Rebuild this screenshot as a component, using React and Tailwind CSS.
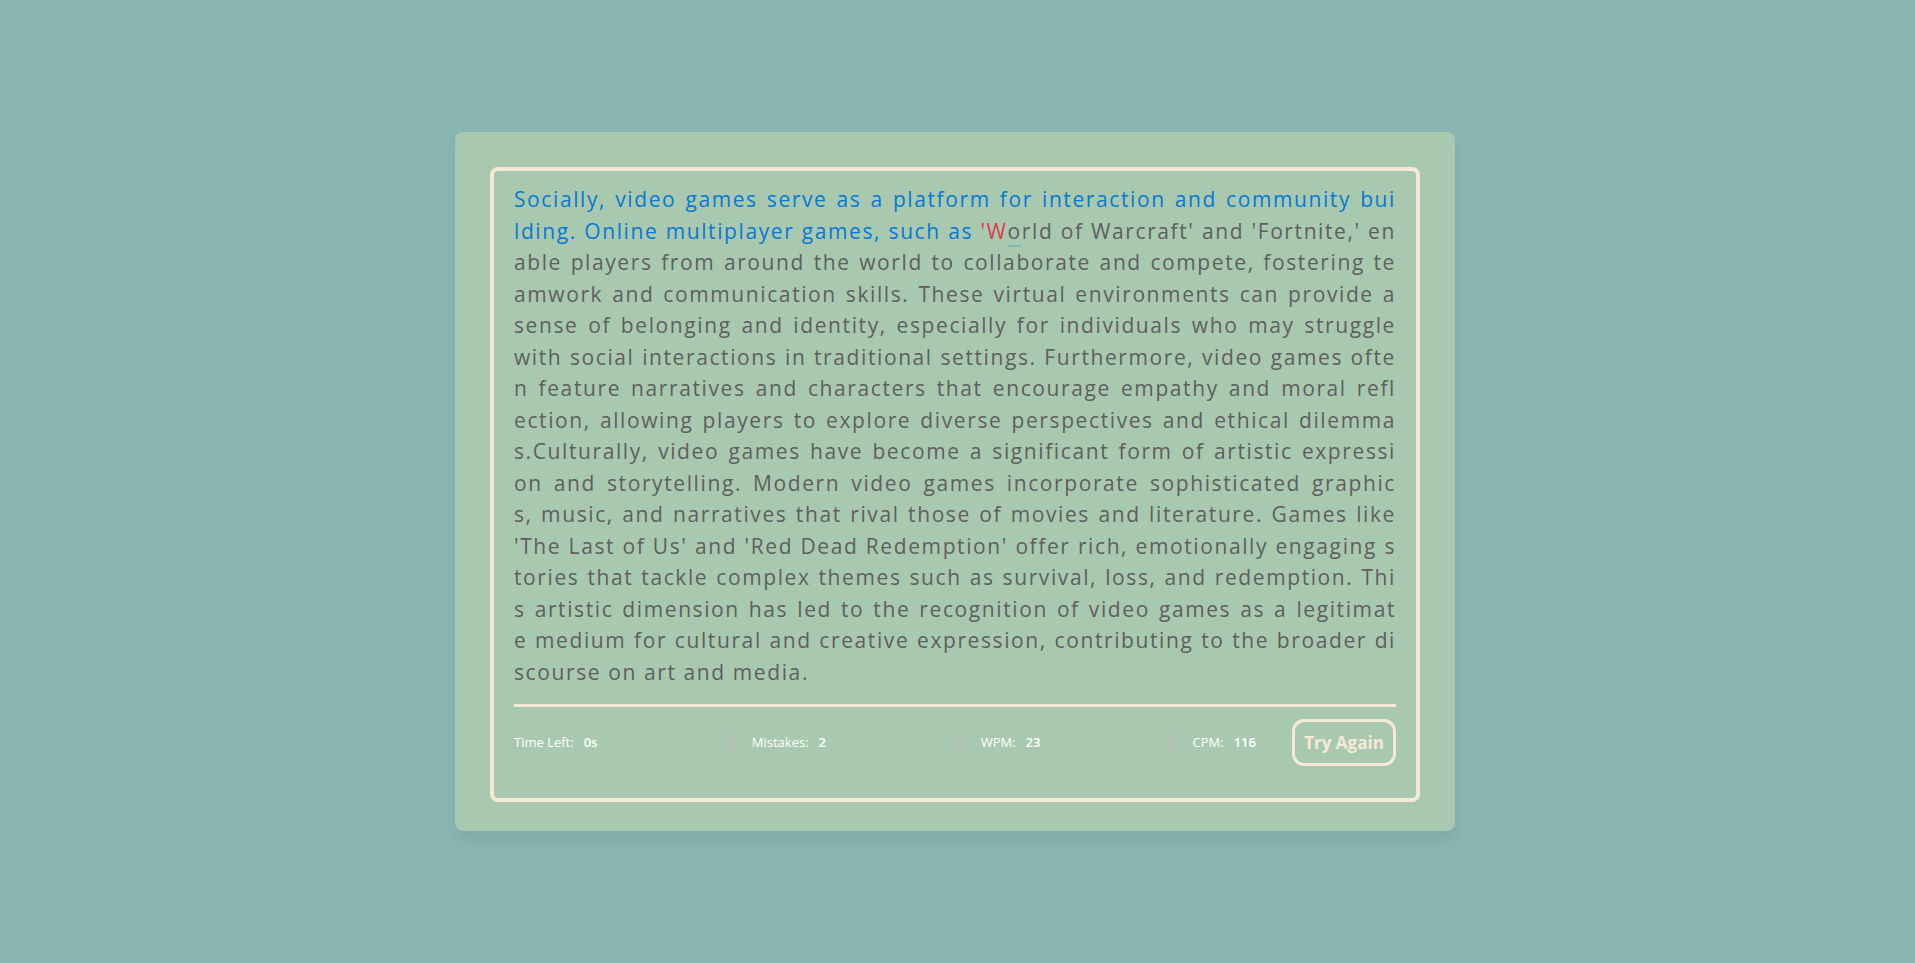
import React from "react";

const typedLines = [
  "Socially, video games serve as a platform for interaction and community bui",
];

const restLines = [
  "able players from around the world to collaborate and compete, fostering te",
  "amwork and communication skills. These virtual environments can provide a",
  "sense of belonging and identity, especially for individuals who may struggle",
  "with social interactions in traditional settings. Furthermore, video games ofte",
  "n feature narratives and characters that encourage empathy and moral refl",
  "ection, allowing players to explore diverse perspectives and ethical dilemma",
  "s.Culturally, video games have become a significant form of artistic expressi",
  "on and storytelling. Modern video games incorporate sophisticated graphic",
  "s, music, and narratives that rival those of movies and literature. Games like",
  "'The Last of Us' and 'Red Dead Redemption' offer rich, emotionally engaging s",
  "tories that tackle complex themes such as survival, loss, and redemption. Thi",
  "s artistic dimension has led to the recognition of video games as a legitimat",
  "e medium for cultural and creative expression, contributing to the broader di",
];

// widths keep the dividers where the design has them
const stats = [
  { label: "Time Left:", value: "0s", cls: "w-[217px]" },
  { label: "Mistakes:", value: "2", cls: "w-[230px] pl-5 border-l-2 border-[#c6b9c4]" },
  { label: "WPM:", value: "23", cls: "w-[213px] pl-5 border-l-2 border-[#c6b9c4]" },
  { label: "CPM:", value: "116", cls: "flex-1 pl-5 border-l-2 border-[#c6b9c4]" },
];

const lineCls = "text-justify [text-align-last:justify] leading-[31.5px]";

const App = () => {
  return (
    <div className="min-h-screen w-full bg-[#89b5b3] flex items-center justify-center pr-[5px] font-['Open_Sans',sans-serif]">
      <div className="w-[1000px] bg-[#a8c9af] rounded-lg px-[35px] pt-[35px] pb-[29px] shadow-[0_10px_15px_rgba(0,0,0,0.06)]">
        <div className="border-4 border-[#f4ead6] rounded-lg pt-[13px] px-5 pb-5">
          {/* typing text */}
          <div className="text-[21px] tracking-[1.6px] text-[#5f5f5f]">
            {typedLines.map((line, i) => (
              <div key={i} className={`${lineCls} text-[#0a78cf]`}>
                {line}
              </div>
            ))}
            <div className={lineCls}>
              <span className="text-[#0a78cf]">
                lding. Online multiplayer games, such as{" "}
              </span>
              <span className="text-[#dc3a4e]">'W</span>
              <span className="relative inline-block">
                o
                <span className="absolute left-0 right-[1px] bottom-0 h-[2px] bg-[#80b9bd]" />
              </span>
              rld of Warcraft' and 'Fortnite,' en
            </div>
            {restLines.map((line, i) => (
              <div key={i} className={lineCls}>
                {line}
              </div>
            ))}
            <div className="leading-[31.5px]">scourse on art and media.</div>
          </div>

          {/* results */}
          <div className="mt-[16px] border-t-[3px] border-[#f4ead6] py-3 flex items-center justify-between">
            <ul className="w-[742px] flex items-center">
              {stats.map((s) => (
                <li
                  key={s.label}
                  className={`flex items-center h-5 text-[13px] text-white ${s.cls}`}
                >
                  <p>{s.label}</p>
                  <span className="ml-[10px] font-semibold">{s.value}</span>
                </li>
              ))}
            </ul>
            <button className="w-[104px] h-[47px] border-[3px] border-[#f4ead6] rounded-xl text-[17px] font-bold text-[#f4ead6]">
              Try Again
            </button>
          </div>
        </div>
      </div>
    </div>
  );
};

export default App;
